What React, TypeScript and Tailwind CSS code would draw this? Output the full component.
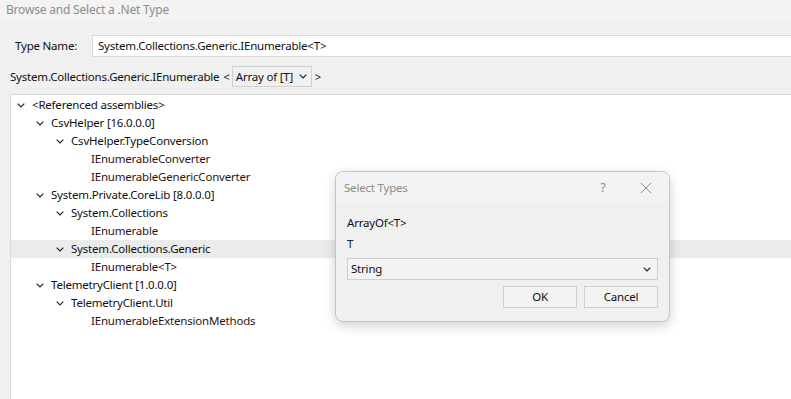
import React from "react";

type Node = {
  label: string;
  level: number;
  leaf?: boolean;
  selected?: boolean;
};

const nodes: Node[] = [
  { label: "<Referenced assemblies>", level: 0 },
  { label: "CsvHelper [16.0.0.0]", level: 1 },
  { label: "CsvHelper.TypeConversion", level: 2 },
  { label: "IEnumerableConverter", level: 3, leaf: true },
  { label: "IEnumerableGenericConverter", level: 3, leaf: true },
  { label: "System.Private.CoreLib [8.0.0.0]", level: 1 },
  { label: "System.Collections", level: 2 },
  { label: "IEnumerable", level: 3, leaf: true },
  { label: "System.Collections.Generic", level: 2, selected: true },
  { label: "IEnumerable<T>", level: 3, leaf: true },
  { label: "TelemetryClient [1.0.0.0]", level: 1 },
  { label: "TelemetryClient.Util", level: 2 },
  { label: "IEnumerableExtensionMethods", level: 3, leaf: true },
];

const indent = ["pl-[6px]", "pl-[25px]", "pl-[45px]", "pl-[65px]"];

function Chevron({ className = "" }: { className?: string }) {
  return (
    <svg width="8" height="5" viewBox="0 0 8 5" className={className}>
      <path d="M0.7 0.7 L4 4 L7.3 0.7" fill="none" stroke="#222" strokeWidth="1.2" />
    </svg>
  );
}

export default function App() {
  return (
    <div className="relative w-[791px] h-[399px] overflow-hidden bg-[#f0f0f0] font-['Noto_Sans',sans-serif] text-[11.5px] tracking-[-0.2px] text-[#0f0f0f]">
      <div className="h-[22px] bg-[#f3f3f3] pl-[6px] pt-[1px] text-[12px] text-[#8c8c8c]">
        Browse and Select a .Net Type
      </div>

      <div className="flex items-center mt-[13px] h-[22px]">
        <span className="pl-[15px] w-[92px]">Type Name:</span>
        <div className="flex-1 h-[22px] bg-white border border-[#d9d9d9] border-r-0 pl-[5px] flex items-center">
          System.Collections.Generic.IEnumerable&lt;T&gt;
        </div>
      </div>

      <div className="flex items-center mt-[9px] h-[21px] pl-[10px] whitespace-nowrap">
        <span>System.Collections.Generic.IEnumerable</span>
        <span className="ml-[4px]">&lt;</span>
        <div className="ml-[2px] h-[21px] w-[80px] border border-[#d0d0d0] bg-[#f0f0f0] flex items-center pl-[3px]">
          <span>Array of [T]</span>
          <Chevron className="ml-[6px]" />
        </div>
        <span className="ml-[3px]">&gt;</span>
      </div>

      <div className="ml-[10px] mt-[7px] h-[320px] bg-white border border-[#d9d9d9] border-r-0 pt-[1px]">
        {nodes.map((n, i) => (
          <div
            key={i}
            className={`h-[18px] flex items-center whitespace-nowrap ${indent[n.level]} ${n.selected ? "bg-[#ebebeb]" : ""}`}
          >
            <span className="w-[15px] flex items-center">
              {!n.leaf && <Chevron />}
            </span>
            <span className={n.leaf ? "text-[#2e1414]" : "text-[#0f0f0f]"}>{n.label}</span>
          </div>
        ))}
      </div>

      <div className="absolute left-[335px] top-[171px] w-[335px] h-[151px] rounded-[8px] border border-[#c4c4c4] bg-[#f0f0f0] shadow-[0_4px_12px_rgba(0,0,0,0.18)] overflow-hidden">
        <div className="h-[31px] bg-[#f3f3f3] flex items-center pl-[8px] text-[#8c8c8c]">
          <span className="flex-1">Select Types</span>
          <span className="w-[14px] text-center mr-[30px] text-[13px]">?</span>
          <svg width="12" height="12" viewBox="0 0 12 12" className="mr-[17px]">
            <path d="M1 1 L11 11 M11 1 L1 11" stroke="#8c8c8c" strokeWidth="1" />
          </svg>
        </div>
        <div className="px-[11px]">
          <div className="mt-[12px] h-[16px] flex items-center">ArrayOf&lt;T&gt;</div>
          <div className="mt-[5px] h-[16px] flex items-center text-[#14263d]">T</div>
          <div className="mt-[6px] h-[22px] border border-[#cfcfcf] bg-[#f3f3f3] flex items-center pl-[3px] pr-[6px]">
            <span className="flex-1">String</span>
            <Chevron />
          </div>
          <div className="mt-[6px] flex justify-end gap-[7px]">
            <button className="w-[74px] h-[22px] border border-[#cfcfcf] bg-[#f3f3f3]">OK</button>
            <button className="w-[74px] h-[22px] border border-[#cfcfcf] bg-[#f3f3f3]">Cancel</button>
          </div>
        </div>
      </div>
    </div>
  );
}
